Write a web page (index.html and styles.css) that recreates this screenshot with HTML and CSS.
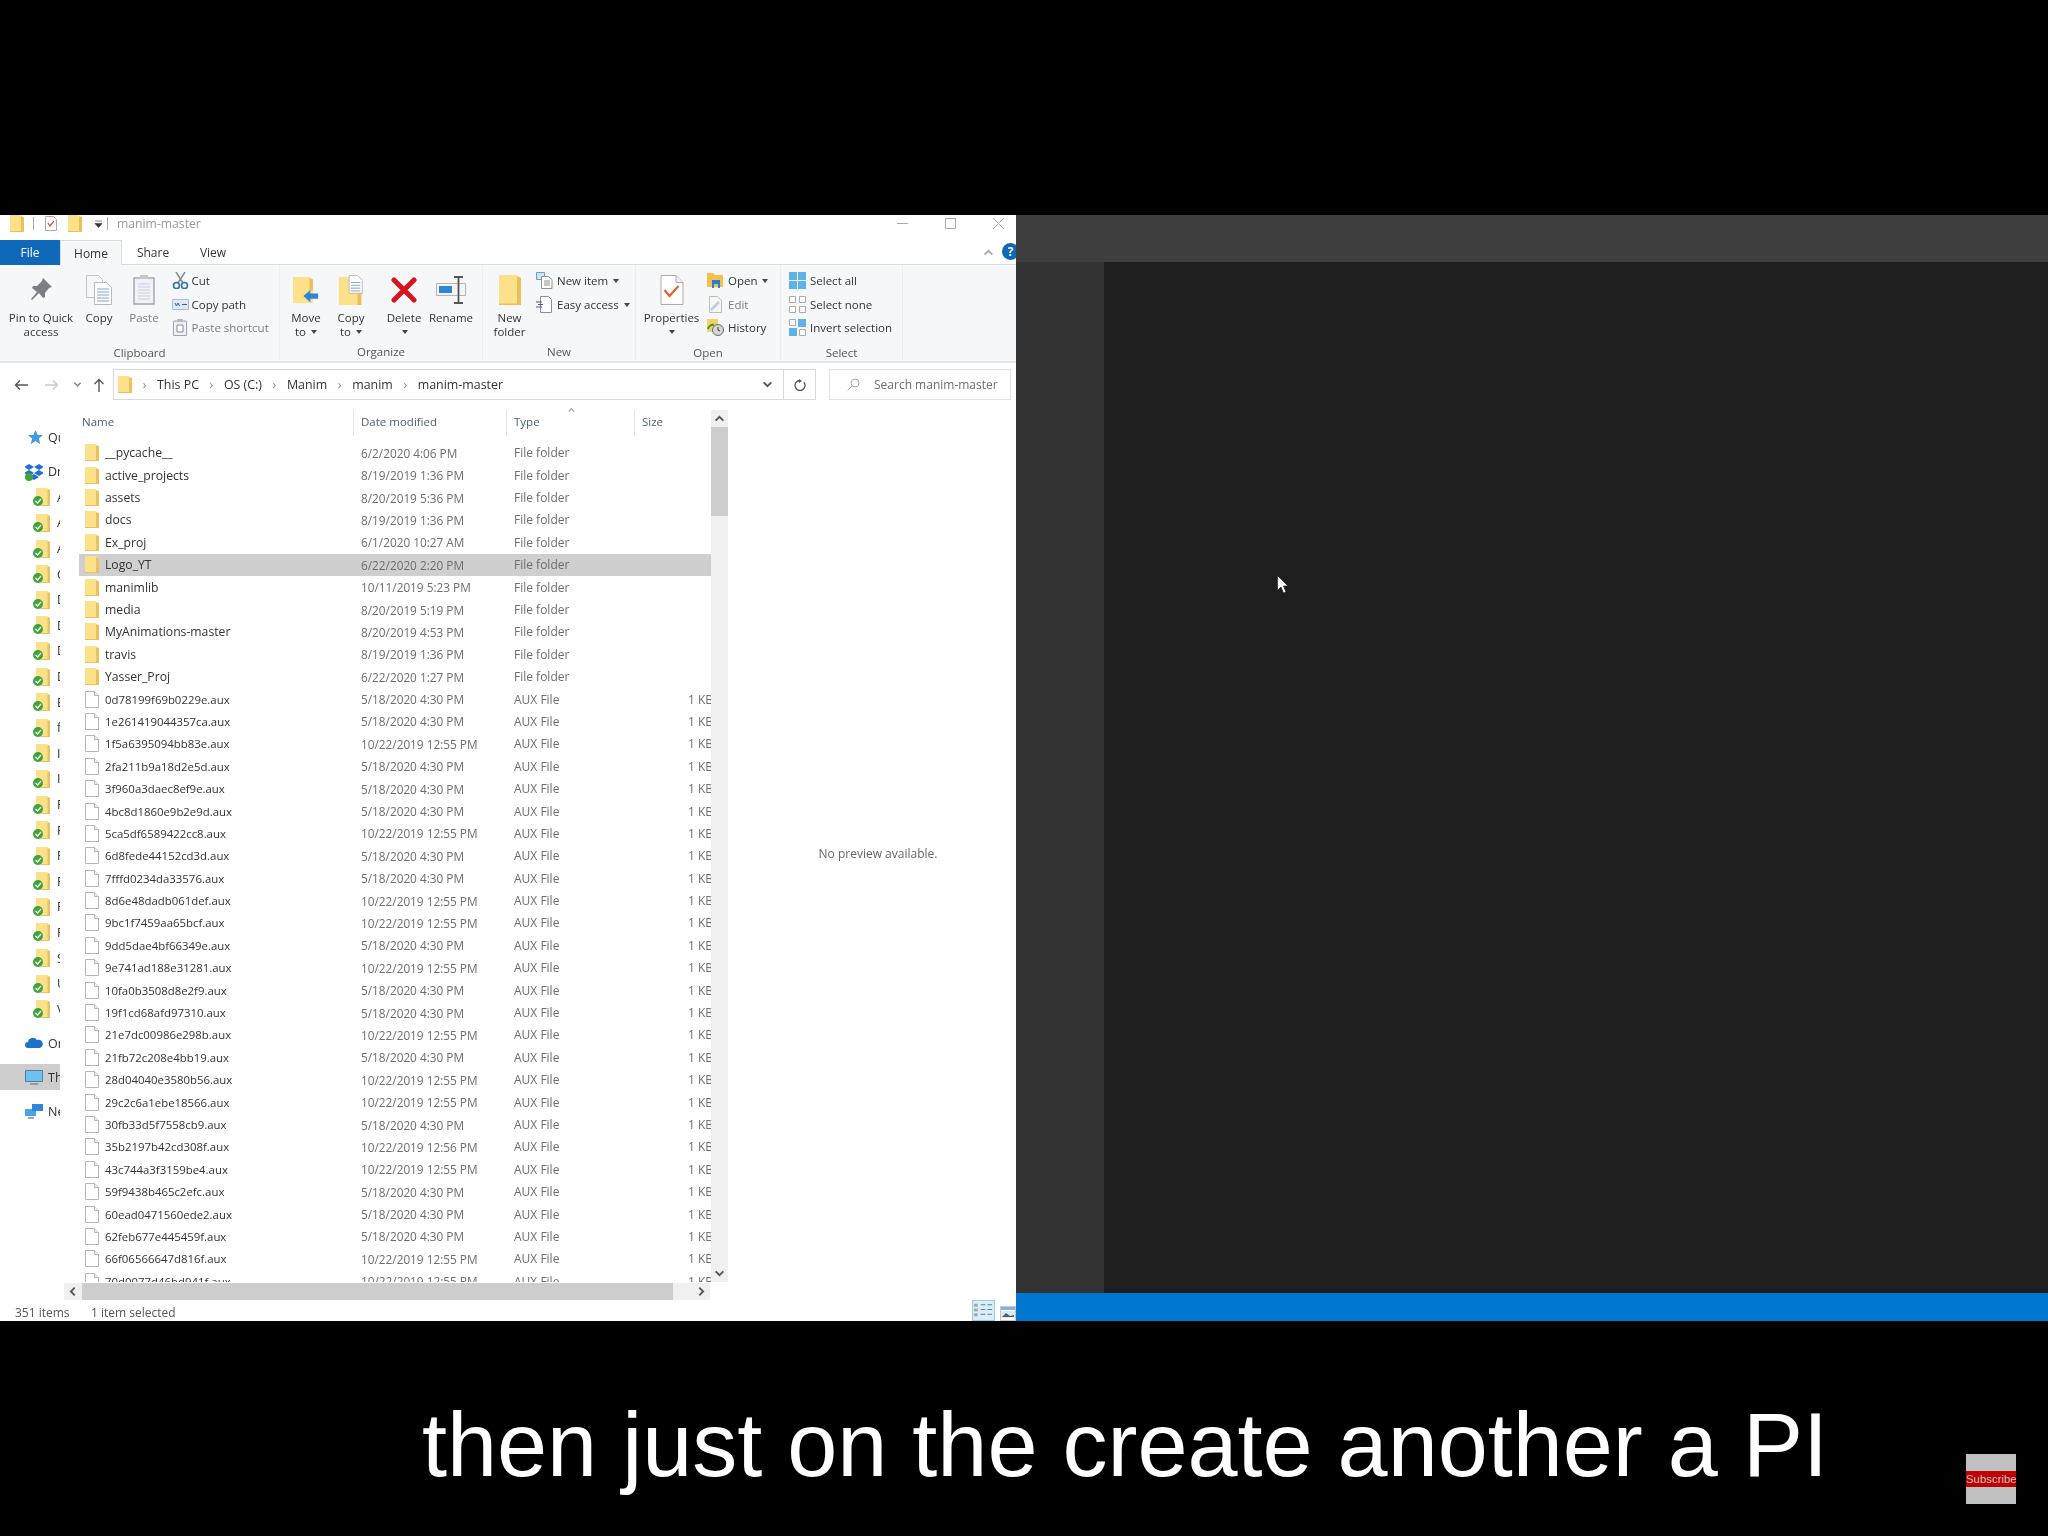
FILE: index.html
```html
<!DOCTYPE html>
<html lang="en">
<head>
  <meta charset="UTF-8">
  <title>manim-master</title>
  <link rel="stylesheet" href="styles.css">
</head>
<body>
  <svg class="defs" width="0" height="0">
    <symbol id="folder" viewBox="0 0 14 17">
      <path d="M0 0h10l4 2v15H0z" fill="#fde08a"/>
      <path d="M11 1.500l3 1V17H0v-1h11z" fill="#e9c25f"/>
    </symbol>
    <symbol id="bigfolder" viewBox="0 0 22 30">
      <path d="M0 0h17l5 3v27H0z" fill="#fde08a"/>
      <path d="M18 1.500l4 1.500v27H0v-1.500h18z" fill="#eabf5a"/>
    </symbol>
    <symbol id="file" viewBox="0 0 14 17">
      <path d="M.5.5h9l4 4v12H.5z" fill="#fff" stroke="#b4b4b4"/>
      <path d="M9.500.5v4h4" fill="#f0f0f0" stroke="#b4b4b4"/>
    </symbol>
    <symbol id="synced" viewBox="0 0 18 18">
      <path d="M3 0h11l3 2v16H3z" fill="#fde08a"/>
      <path d="M14.500 1l2.500 1v16H8v-1h6.500z" fill="#e9c25f"/>
      <circle cx="5" cy="13" r="5" fill="#3ea53a"/>
      <path d="M2.500 13l2 2 3.500-4" fill="none" stroke="#fff" stroke-width="1.300"/>
    </symbol>
    <symbol id="chev" viewBox="0 0 10 10">
      <path d="M1.500 7L5 3.500 8.500 7" fill="none" stroke="currentColor" stroke-width="1.700"/>
    </symbol>
  </svg>

  <div class="top-band"></div>

  <main class="screen">
    <section class="window">
      <header class="titlebar">
        <svg class="qa qa-folder"><use href="#folder"/></svg>
        <span class="qa-sep"></span>
        <svg class="qa qa-props" viewBox="0 0 12 15"><path d="M.5.5h8l3 3v11H.5z" fill="#fff" stroke="#aaa"/><path d="M3 7l2 3 4-5" fill="none" stroke="#d9542b" stroke-width="1.300"/></svg>
        <svg class="qa qa-folder2"><use href="#folder"/></svg>
        <svg class="qa qa-down" viewBox="0 0 9 8"><path d="M1 1h7M1 3.500h7l-3.500 4z" fill="#333" stroke="#333" stroke-width=".6"/></svg>
        <span class="qa-sep qa-sep-b"></span>
        <span class="title-text">manim-master</span>
        <div class="win-btns">
          <svg viewBox="0 0 11 11"><path d="M0 5.500h11" stroke="#aaa"/></svg>
          <svg viewBox="0 0 11 11"><path d="M.5.500h10v10H.5z" fill="none" stroke="#aaa"/></svg>
          <svg viewBox="0 0 11 11"><path d="M0 0l11 11M11 0L0 11" stroke="#aaa"/></svg>
        </div>
      </header>

      <nav class="tabs">
        <span class="tab tab-file">File</span>
        <span class="tab tab-home">Home</span>
        <span class="tab tab-share">Share</span>
        <span class="tab tab-view">View</span>
        <svg class="collapse"><use href="#chev"/></svg>
        <span class="help">?</span>
      </nav>

      <div class="ribbon">
        <div class="group group-clipboard">
          <div class="group-items">
            <div class="big w-pin">
              <svg viewBox="0 0 22 24"><path d="M13 0l9 9-3 1-4 5 0 4-2 1-4-5-7 7-1-1 6-7-5-4 1-2h4l5-5z" fill="#7d7d85"/></svg>
              <span>Pin to Quick<br>access</span>
            </div>
            <div class="big w-copy">
              <svg viewBox="0 0 26 30"><path d="M.5.500h12l4 4v18H.5z" fill="#f7f7f7" stroke="#c3c3c3"/><path d="M8.500 7.500h12l5 5v17h-17z" fill="#fff" stroke="#b9b9b9"/><path d="M11 14h12M11 17h12M11 20h12M11 23h12M11 26h12" stroke="#7fa7c9"/></svg>
              <span>Copy</span>
            </div>
            <div class="big w-paste off">
              <svg viewBox="0 0 22 30"><path d="M1 3h20v26H1z" fill="#f2f2f6" stroke="#a7a7b5" stroke-width="1.500"/><path d="M7 0h8v4H7z" fill="#c5c5c5"/><path d="M5 9h12M5 12h12M5 15h12M5 18h12M5 21h12M5 24h12" stroke="#c9cfe3"/></svg>
              <span>Paste</span>
            </div>
            <div class="small-col">
              <div class="small">
                <svg viewBox="0 0 17 17"><path d="M4 0l7 11M13 0L6 11" stroke="#8a8a8a" stroke-width="1.500"/><circle cx="4.500" cy="13.500" r="3" fill="none" stroke="#2c6fb7" stroke-width="1.600"/><circle cx="12.500" cy="13.500" r="3" fill="none" stroke="#2c6fb7" stroke-width="1.600"/></svg>
                <span>Cut</span>
              </div>
              <div class="small">
                <svg viewBox="0 0 17 17"><path d="M.5 3.500h16v10H.5z" fill="#dfe9f7" stroke="#a9bcd6"/><path d="M3 7l1.500 3L6 7l1.500 3M10 8.500h5" stroke="#2f5fa8" fill="none"/></svg>
                <span>Copy path</span>
              </div>
              <div class="small off">
                <svg viewBox="0 0 17 17"><path d="M1.500 2h13v14.500h-13z" fill="#eef0f7" stroke="#9aa3b9"/><path d="M5 0h6v3H5z" fill="#b9b9b9"/><path d="M5 6h6v7H5z" fill="#fff" stroke="#8a8a8a"/></svg>
                <span>Paste shortcut</span>
              </div>
            </div>
          </div>
          <div class="group-label">Clipboard</div>
        </div>

        <div class="group group-organize">
          <div class="group-items">
            <div class="big w-move">
              <svg viewBox="0 0 30 30"><path d="M0 0h18l5 3v27H0z" fill="#fde08a"/><path d="M19 1.500l4 1.500v13h-4z" fill="#eabf5a"/><path d="M12 22l8-7v4h9v6h-9v4z" fill="#2f86d6"/></svg>
              <span>Move<br>to <i class="caret"></i></span>
            </div>
            <div class="big w-copyto">
              <svg viewBox="0 0 26 32"><path d="M0 2h19l5 3v27H0z" fill="#fde08a"/><path d="M20 3.500l4 1.500v27h-4z" fill="#eabf5a"/><path d="M11 .5h9l5 5v14H11z" fill="#fff" stroke="#b9b9b9"/><path d="M13 8h10M13 11h10M13 14h10M13 17h10" stroke="#7fa7c9"/></svg>
              <span>Copy<br>to <i class="caret"></i></span>
            </div>
            <div class="big w-delete">
              <svg viewBox="0 0 26 26"><path d="M3 3l20 20M23 3L3 23" stroke="#d8121f" stroke-width="5" stroke-linecap="round"/></svg>
              <span>Delete<br><i class="caret"></i></span>
            </div>
            <div class="big w-rename">
              <svg viewBox="0 0 30 28"><path d="M.5 7.500h29v12H.5z" fill="#f4f4f4" stroke="#b5b5b5"/><path d="M3 10h13v7H3z" fill="#2f86d6"/><path d="M18 1h9M22.500 1v26M18 27h9" stroke="#555" stroke-width="1.800"/></svg>
              <span>Rename</span>
            </div>
          </div>
          <div class="group-label">Organize</div>
        </div>

        <div class="group group-new">
          <div class="group-items">
            <div class="big w-newfolder">
              <svg class="big-narrow"><use href="#bigfolder"/></svg>
              <span>New<br>folder</span>
            </div>
            <div class="small-col">
              <div class="small">
                <svg viewBox="0 0 17 17"><path d="M.5.5h8v7h-8z" fill="#cfe3f5" stroke="#6f9cc4"/><path d="M5.500 4.500h7l3.500 3v9H5.500z" fill="#fff" stroke="#8f8f8f"/><path d="M8 9h6M8 11h6M8 13h6" stroke="#8f8f8f"/></svg>
                <span>New item <i class="caret"></i></span>
              </div>
              <div class="small">
                <svg viewBox="0 0 17 17"><path d="M4.500.5h8l3 3v13h-11z" fill="#fff" stroke="#8f8f8f"/><path d="M0 6h6M2 8.500h5M0 11h6" stroke="#2f5fa8"/></svg>
                <span>Easy access <i class="caret"></i></span>
              </div>
            </div>
          </div>
          <div class="group-label">New</div>
        </div>

        <div class="group group-open">
          <div class="group-items">
            <div class="big w-props">
              <svg viewBox="0 0 23 30"><path d="M.5.500h15l7 7v22H.5z" fill="#fff" stroke="#a9a9a9"/><path d="M15.500.5v7h7" fill="#eee" stroke="#a9a9a9"/><path d="M4 15l5 6 9-10" fill="none" stroke="#e2622b" stroke-width="2.200"/></svg>
              <span>Properties<br><i class="caret"></i></span>
            </div>
            <div class="small-col">
              <div class="small">
                <svg viewBox="0 0 17 17"><path d="M0 1h6l2 2h8v12H0z" fill="#f4c04e"/><path d="M5 8h8v8h-2v-4H7v4H5z" fill="#2b7fcf"/></svg>
                <span>Open <i class="caret"></i></span>
              </div>
              <div class="small off">
                <svg viewBox="0 0 17 17"><path d="M2.500.5h8l4 4v12h-12z" fill="#f6f6f6" stroke="#bbb"/><path d="M4 14l8-8" stroke="#b9cde6" stroke-width="2.500"/></svg>
                <span>Edit</span>
              </div>
              <div class="small">
                <svg viewBox="0 0 17 17"><path d="M0 0h11v13H0z" fill="#f6d266"/><path d="M1 10a5 5 0 0 1 6-4" stroke="#3c9b35" stroke-width="2" fill="none"/><circle cx="11" cy="11" r="5.500" fill="#d6d6d6" stroke="#6a6a6a"/><path d="M11 8v3l2 1" stroke="#333" fill="none"/></svg>
                <span>History</span>
              </div>
            </div>
          </div>
          <div class="group-label">Open</div>
        </div>

        <div class="group group-select">
          <div class="group-items">
            <div class="small-col">
              <div class="small">
                <svg viewBox="0 0 17 17"><path d="M0 0h8v8H0zM9 0h8v8H9zM0 9h8v8H0zM9 9h8v8H9z" fill="#5db2ea"/></svg>
                <span>Select all</span>
              </div>
              <div class="small">
                <svg viewBox="0 0 17 17"><path d="M.5.5h6v6h-6zM10.500.5h6v6h-6zM.5 10.500h6v6h-6zM10.500 10.500h6v6h-6z" fill="#fff" stroke="#aaa"/></svg>
                <span>Select none</span>
              </div>
              <div class="small">
                <svg viewBox="0 0 17 17"><path d="M.5.5h6v6h-6zM10.500 10.500h6v6h-6z" fill="#fff" stroke="#aaa"/><path d="M9 0h8v8H9zM0 9h8v8H0z" fill="#5db2ea"/></svg>
                <span>Invert selection</span>
              </div>
            </div>
          </div>
          <div class="group-label">Select</div>
        </div>
      </div>

      <div class="addressrow">
        <svg class="nav-arrow" viewBox="0 0 14 12"><path d="M14 6H2M6 1.500L1.500 6 6 10.500" fill="none" stroke="#555" stroke-width="1.400"/></svg>
        <svg class="nav-arrow nav-fwd" viewBox="0 0 14 12"><path d="M0 6h12M8 1.500L12.500 6 8 10.500" fill="none" stroke="#ccc" stroke-width="1.400"/></svg>
        <svg class="nav-recent"><use href="#chev"/></svg>
        <svg class="nav-up" viewBox="0 0 12 14"><path d="M6 14V2M1.500 6L6 1.500 10.500 6" fill="none" stroke="#555" stroke-width="1.400"/></svg>
        <div class="address">
          <svg class="addr-folder"><use href="#folder"/></svg>
          <span class="crumb-sep">&rsaquo;</span><span>This PC</span>
          <span class="crumb-sep">&rsaquo;</span><span>OS (C:)</span>
          <span class="crumb-sep">&rsaquo;</span><span>Manim</span>
          <span class="crumb-sep">&rsaquo;</span><span>manim</span>
          <span class="crumb-sep">&rsaquo;</span><span>manim-master</span>
          <div class="addr-end">
            <svg class="addr-drop"><use href="#chev"/></svg>
            <div class="addr-refresh">
              <svg viewBox="0 0 12 12"><path d="M9.800 3.200A5 5 0 1 1 6 1.500" fill="none" stroke="#555" stroke-width="1.300"/><path d="M5 0l3 2-3 2z" fill="#555"/></svg>
            </div>
          </div>
        </div>
        <div class="search">
          <svg viewBox="0 0 13 13"><circle cx="8" cy="5" r="4" fill="none" stroke="#aaa"/><path d="M5 8l-4.500 4.500" stroke="#aaa"/></svg>
          <span>Search manim-master</span>
        </div>
      </div>

      <div class="explorer">
        <aside class="navpane">
          <div class="nav-item top first"><svg class="nav-star" viewBox="0 0 18 18"><path d="M9 0l2.600 6H18l-5 4.300L14.800 17 9 13.200 3.200 17 5 10.300 0 6h6.400z" fill="#3f9be0"/></svg><span>Quick access</span></div>
          <div class="nav-item top"><svg viewBox="0 0 18 18"><path d="M4 1l5 3-5 3-5-3zM14 1l5 3-5 3-5-3zM4 7l5 3-5 3-5-3zM14 7l5 3-5 3-5-3zM9 11l5 3-5 3-5-3z" fill="#1f6fd6"/><circle cx="4" cy="14" r="4" fill="#3ea53a"/></svg><span>Dropbox</span></div>
          <div class="nav-item sub"><svg><use href="#synced"/></svg><span>A</span></div>
          <div class="nav-item sub"><svg><use href="#synced"/></svg><span>A</span></div>
          <div class="nav-item sub"><svg><use href="#synced"/></svg><span>A</span></div>
          <div class="nav-item sub"><svg><use href="#synced"/></svg><span>C</span></div>
          <div class="nav-item sub"><svg><use href="#synced"/></svg><span>D</span></div>
          <div class="nav-item sub"><svg><use href="#synced"/></svg><span>D</span></div>
          <div class="nav-item sub"><svg><use href="#synced"/></svg><span>D</span></div>
          <div class="nav-item sub"><svg><use href="#synced"/></svg><span>D</span></div>
          <div class="nav-item sub"><svg><use href="#synced"/></svg><span>E</span></div>
          <div class="nav-item sub"><svg><use href="#synced"/></svg><span>f</span></div>
          <div class="nav-item sub"><svg><use href="#synced"/></svg><span>I</span></div>
          <div class="nav-item sub"><svg><use href="#synced"/></svg><span>I</span></div>
          <div class="nav-item sub"><svg><use href="#synced"/></svg><span>F</span></div>
          <div class="nav-item sub"><svg><use href="#synced"/></svg><span>F</span></div>
          <div class="nav-item sub"><svg><use href="#synced"/></svg><span>F</span></div>
          <div class="nav-item sub"><svg><use href="#synced"/></svg><span>F</span></div>
          <div class="nav-item sub"><svg><use href="#synced"/></svg><span>F</span></div>
          <div class="nav-item sub"><svg><use href="#synced"/></svg><span>F</span></div>
          <div class="nav-item sub"><svg><use href="#synced"/></svg><span>S</span></div>
          <div class="nav-item sub"><svg><use href="#synced"/></svg><span>U</span></div>
          <div class="nav-item sub"><svg><use href="#synced"/></svg><span>V</span></div>
          <div class="nav-item top"><svg viewBox="0 0 18 18"><path d="M3 14a3 3 0 0 1 0-6 5 5 0 0 1 9-2 4 4 0 0 1 3 8z" fill="#1a73c9"/></svg><span>OneDrive</span></div>
          <div class="nav-item top current"><svg viewBox="0 0 18 18"><path d="M.5 2.500h17v11H.5z" fill="#6cc3f2" stroke="#5a7d99"/><path d="M5 16h8" stroke="#8a8a8a" stroke-width="1.500"/></svg><span>This PC</span></div>
          <div class="nav-item top"><svg viewBox="0 0 18 18"><path d="M0 7h11v7H0z" fill="#4aa3e6"/><path d="M7 2h11v7H7z" fill="#2f86d6"/><path d="M3 16h6" stroke="#7a8a99" stroke-width="1.500"/></svg><span>Network</span></div>
        </aside>

        <div class="files">
          <div class="files-top">
            <div class="list">
              <div class="list-head">
                <span class="col-name">Name</span>
                <span class="col-date">Date modified</span>
                <span class="col-type">Type<svg class="sort"><use href="#chev"/></svg></span>
                <span class="col-size">Size</span>
              </div>
              <div class="row"><svg><use href="#folder"/></svg><span class="col-name">__pycache__</span><span class="col-date">6/2/2020 4:06 PM</span><span class="col-type">File folder</span></div>
              <div class="row"><svg><use href="#folder"/></svg><span class="col-name">active_projects</span><span class="col-date">8/19/2019 1:36 PM</span><span class="col-type">File folder</span></div>
              <div class="row"><svg><use href="#folder"/></svg><span class="col-name">assets</span><span class="col-date">8/20/2019 5:36 PM</span><span class="col-type">File folder</span></div>
              <div class="row"><svg><use href="#folder"/></svg><span class="col-name">docs</span><span class="col-date">8/19/2019 1:36 PM</span><span class="col-type">File folder</span></div>
              <div class="row"><svg><use href="#folder"/></svg><span class="col-name">Ex_proj</span><span class="col-date">6/1/2020 10:27 AM</span><span class="col-type">File folder</span></div>
              <div class="row selected"><svg><use href="#folder"/></svg><span class="col-name">Logo_YT</span><span class="col-date">6/22/2020 2:20 PM</span><span class="col-type">File folder</span></div>
              <div class="row"><svg><use href="#folder"/></svg><span class="col-name">manimlib</span><span class="col-date">10/11/2019 5:23 PM</span><span class="col-type">File folder</span></div>
              <div class="row"><svg><use href="#folder"/></svg><span class="col-name">media</span><span class="col-date">8/20/2019 5:19 PM</span><span class="col-type">File folder</span></div>
              <div class="row"><svg><use href="#folder"/></svg><span class="col-name">MyAnimations-master</span><span class="col-date">8/20/2019 4:53 PM</span><span class="col-type">File folder</span></div>
              <div class="row"><svg><use href="#folder"/></svg><span class="col-name">travis</span><span class="col-date">8/19/2019 1:36 PM</span><span class="col-type">File folder</span></div>
              <div class="row"><svg><use href="#folder"/></svg><span class="col-name">Yasser_Proj</span><span class="col-date">6/22/2020 1:27 PM</span><span class="col-type">File folder</span></div>
              <div class="row aux"><svg><use href="#file"/></svg><span class="col-name">0d78199f69b0229e.aux</span><span class="col-date">5/18/2020 4:30 PM</span><span class="col-type">AUX File</span><span class="col-size">1 KB</span></div>
              <div class="row aux"><svg><use href="#file"/></svg><span class="col-name">1e261419044357ca.aux</span><span class="col-date">5/18/2020 4:30 PM</span><span class="col-type">AUX File</span><span class="col-size">1 KB</span></div>
              <div class="row aux"><svg><use href="#file"/></svg><span class="col-name">1f5a6395094bb83e.aux</span><span class="col-date">10/22/2019 12:55 PM</span><span class="col-type">AUX File</span><span class="col-size">1 KB</span></div>
              <div class="row aux"><svg><use href="#file"/></svg><span class="col-name">2fa211b9a18d2e5d.aux</span><span class="col-date">5/18/2020 4:30 PM</span><span class="col-type">AUX File</span><span class="col-size">1 KB</span></div>
              <div class="row aux"><svg><use href="#file"/></svg><span class="col-name">3f960a3daec8ef9e.aux</span><span class="col-date">5/18/2020 4:30 PM</span><span class="col-type">AUX File</span><span class="col-size">1 KB</span></div>
              <div class="row aux"><svg><use href="#file"/></svg><span class="col-name">4bc8d1860e9b2e9d.aux</span><span class="col-date">5/18/2020 4:30 PM</span><span class="col-type">AUX File</span><span class="col-size">1 KB</span></div>
              <div class="row aux"><svg><use href="#file"/></svg><span class="col-name">5ca5df6589422cc8.aux</span><span class="col-date">10/22/2019 12:55 PM</span><span class="col-type">AUX File</span><span class="col-size">1 KB</span></div>
              <div class="row aux"><svg><use href="#file"/></svg><span class="col-name">6d8fede44152cd3d.aux</span><span class="col-date">5/18/2020 4:30 PM</span><span class="col-type">AUX File</span><span class="col-size">1 KB</span></div>
              <div class="row aux"><svg><use href="#file"/></svg><span class="col-name">7fffd0234da33576.aux</span><span class="col-date">5/18/2020 4:30 PM</span><span class="col-type">AUX File</span><span class="col-size">1 KB</span></div>
              <div class="row aux"><svg><use href="#file"/></svg><span class="col-name">8d6e48dadb061def.aux</span><span class="col-date">10/22/2019 12:55 PM</span><span class="col-type">AUX File</span><span class="col-size">1 KB</span></div>
              <div class="row aux"><svg><use href="#file"/></svg><span class="col-name">9bc1f7459aa65bcf.aux</span><span class="col-date">10/22/2019 12:55 PM</span><span class="col-type">AUX File</span><span class="col-size">1 KB</span></div>
              <div class="row aux"><svg><use href="#file"/></svg><span class="col-name">9dd5dae4bf66349e.aux</span><span class="col-date">5/18/2020 4:30 PM</span><span class="col-type">AUX File</span><span class="col-size">1 KB</span></div>
              <div class="row aux"><svg><use href="#file"/></svg><span class="col-name">9e741ad188e31281.aux</span><span class="col-date">10/22/2019 12:55 PM</span><span class="col-type">AUX File</span><span class="col-size">1 KB</span></div>
              <div class="row aux"><svg><use href="#file"/></svg><span class="col-name">10fa0b3508d8e2f9.aux</span><span class="col-date">5/18/2020 4:30 PM</span><span class="col-type">AUX File</span><span class="col-size">1 KB</span></div>
              <div class="row aux"><svg><use href="#file"/></svg><span class="col-name">19f1cd68afd97310.aux</span><span class="col-date">5/18/2020 4:30 PM</span><span class="col-type">AUX File</span><span class="col-size">1 KB</span></div>
              <div class="row aux"><svg><use href="#file"/></svg><span class="col-name">21e7dc00986e298b.aux</span><span class="col-date">10/22/2019 12:55 PM</span><span class="col-type">AUX File</span><span class="col-size">1 KB</span></div>
              <div class="row aux"><svg><use href="#file"/></svg><span class="col-name">21fb72c208e4bb19.aux</span><span class="col-date">5/18/2020 4:30 PM</span><span class="col-type">AUX File</span><span class="col-size">1 KB</span></div>
              <div class="row aux"><svg><use href="#file"/></svg><span class="col-name">28d04040e3580b56.aux</span><span class="col-date">10/22/2019 12:55 PM</span><span class="col-type">AUX File</span><span class="col-size">1 KB</span></div>
              <div class="row aux"><svg><use href="#file"/></svg><span class="col-name">29c2c6a1ebe18566.aux</span><span class="col-date">10/22/2019 12:55 PM</span><span class="col-type">AUX File</span><span class="col-size">1 KB</span></div>
              <div class="row aux"><svg><use href="#file"/></svg><span class="col-name">30fb33d5f7558cb9.aux</span><span class="col-date">5/18/2020 4:30 PM</span><span class="col-type">AUX File</span><span class="col-size">1 KB</span></div>
              <div class="row aux"><svg><use href="#file"/></svg><span class="col-name">35b2197b42cd308f.aux</span><span class="col-date">10/22/2019 12:56 PM</span><span class="col-type">AUX File</span><span class="col-size">1 KB</span></div>
              <div class="row aux"><svg><use href="#file"/></svg><span class="col-name">43c744a3f3159be4.aux</span><span class="col-date">10/22/2019 12:55 PM</span><span class="col-type">AUX File</span><span class="col-size">1 KB</span></div>
              <div class="row aux"><svg><use href="#file"/></svg><span class="col-name">59f9438b465c2efc.aux</span><span class="col-date">5/18/2020 4:30 PM</span><span class="col-type">AUX File</span><span class="col-size">1 KB</span></div>
              <div class="row aux"><svg><use href="#file"/></svg><span class="col-name">60ead0471560ede2.aux</span><span class="col-date">5/18/2020 4:30 PM</span><span class="col-type">AUX File</span><span class="col-size">1 KB</span></div>
              <div class="row aux"><svg><use href="#file"/></svg><span class="col-name">62feb677e445459f.aux</span><span class="col-date">5/18/2020 4:30 PM</span><span class="col-type">AUX File</span><span class="col-size">1 KB</span></div>
              <div class="row aux"><svg><use href="#file"/></svg><span class="col-name">66f06566647d816f.aux</span><span class="col-date">10/22/2019 12:55 PM</span><span class="col-type">AUX File</span><span class="col-size">1 KB</span></div>
              <div class="row aux"><svg><use href="#file"/></svg><span class="col-name">70d0077d46bd941f.aux</span><span class="col-date">10/22/2019 12:55 PM</span><span class="col-type">AUX File</span><span class="col-size">1 KB</span></div>
            </div>
            <div class="vscroll">
              <svg class="arrow"><use href="#chev"/></svg>
              <div class="vthumb"></div>
              <svg class="arrow arrow-down"><use href="#chev"/></svg>
            </div>
          </div>
          <div class="hscroll">
            <svg class="arrow arrow-left"><use href="#chev"/></svg>
            <div class="hthumb"></div>
            <svg class="arrow arrow-right"><use href="#chev"/></svg>
          </div>
        </div>

        <div class="preview">No preview available.</div>
      </div>

      <footer class="status">
        <span class="count">351 items</span>
        <span>1 item selected</span>
        <div class="views">
          <div class="view-btn active"><svg viewBox="0 0 22 16"><path d="M1 2h4v3H1zM1 7h4v3H1zM1 12h4v3H1z" fill="#aaa"/><path d="M8 3h5M15 3h5M8 8h5M15 8h5M8 13h5M15 13h5" stroke="#5c7c99"/></svg></div>
          <div class="view-btn"><svg viewBox="0 0 14 12"><path d="M0 0h14v3H0z" fill="#7ab6ea"/><path d="M0 4h14v7H0z" fill="#dfe8ef"/><path d="M1 10l4-4 4 3 4-1v2z" fill="#3f6a6a"/></svg></div>
        </div>
      </footer>
    </section>

    <section class="editor">
      <div class="editor-title"></div>
      <div class="editor-body">
        <div class="editor-side"></div>
        <div class="editor-main"></div>
      </div>
      <div class="editor-status"></div>
    </section>

    <svg class="cursor" viewBox="0 0 11 19"><path d="M.5.5v15l3.500-3.500 2.500 6 2.500-1-2.500-6h4.500z" fill="#fff" stroke="#222" stroke-width=".7"/></svg>
  </main>

  <footer class="caption-band">
    <p class="caption">then just on the create another a PI</p>
    <div class="subscribe"><span>Subscribe</span></div>
  </footer>
</body>
</html>
```

FILE: styles.css
```css
* {
  box-sizing: border-box;
}

html, body {
  margin: 0;
  height: 100%;
}

body {
  width: 2048px;
  height: 1536px;
  overflow: hidden;
  background: #000;
  display: flex;
  flex-direction: column;
  font-family: "Open Sans", "Noto Sans", sans-serif;
  font-size: 11.5px;
  color: #333;
}

svg {
  display: block;
  flex: none;
}

.defs {
  position: absolute;
}

.top-band {
  height: 215px;
}

.screen {
  position: relative;
  height: 1106px;
  display: flex;
}

/* explorer window */

.window {
  width: 1016px;
  background: #fff;
  display: flex;
  flex-direction: column;
  overflow: hidden;
  filter: blur(0.45px);
}

.titlebar {
  height: 25px;
  display: flex;
  align-items: center;
  padding: 0 0 8px 10px;
  color: #999;
}

.qa-folder {
  width: 14px;
  height: 17px;
}

.qa-sep {
  width: 1px;
  height: 13px;
  background: #aaa;
  margin: 0 11px 0 9px;
}

.qa-props {
  width: 12px;
  height: 15px;
}

.qa-folder2 {
  width: 14px;
  height: 17px;
  margin-left: 11px;
}

.qa-down {
  width: 9px;
  height: 8px;
  margin-left: 12px;
}

.qa-sep-b {
  margin: 0 9px 0 4px;
}

.title-text {
  font-size: 12.2px;
}

.win-btns {
  margin-left: auto;
  display: flex;
  margin-right: 12px;
  gap: 37px;
}

.win-btns svg {
  width: 11px;
  height: 11px;
}

.tabs {
  height: 25px;
  display: flex;
  position: relative;
  border-bottom: 1px solid #dadbdc;
  font-size: 12px;
}

.tab {
  line-height: 26px;
  text-align: center;
}

.tab-file {
  width: 60px;
  background: #0f68b8;
  color: #fff;
  height: 25px;
}

.tab-home {
  width: 62px;
  height: 25px;
  background: #f6f7f8;
  border: 1px solid #dadbdc;
  border-bottom: 0;
}

.tab-share {
  width: 62px;
}

.tab-view {
  width: 58px;
}

.collapse {
  width: 11px;
  height: 11px;
  color: #aaa;
  margin: 7px 0 0 auto;
}

.help {
  width: 17px;
  height: 17px;
  border-radius: 50%;
  background: #0f68b8;
  color: #fff;
  font-weight: 700;
  line-height: 17px;
  text-align: center;
  margin: 3px -3px 0 8px;
  flex: none;
}

.ribbon {
  height: 98px;
  display: flex;
  background: #f6f7f8;
  border-bottom: 2px solid #e6e7e8;
}

.group {
  display: flex;
  flex-direction: column;
  border-right: 1px solid #ecedee;
}

.group-clipboard { width: 280px; padding-left: 6px; }
.group-organize { width: 203px; }
.group-new { width: 153px; }
.group-open { width: 145px; }
.group-select { width: 122px; padding-left: 8px; }

.group-items {
  flex: 1;
  display: flex;
}

.group-label {
  height: 24px;
  line-height: 25px;
  text-align: center;
  color: #555;
}

.group-clipboard .group-label {
  margin-left: -6px;
}

.group-clipboard .small {
  gap: 3px;
}

.group-select .group-label {
  margin-left: -8px;
}

.big {
  display: flex;
  flex-direction: column;
  align-items: center;
  text-align: center;
  line-height: 14px;
  padding-top: 10px;
}

.big svg {
  width: 26px;
  height: 30px;
  margin-bottom: 6px;
}

.big span {
  white-space: nowrap;
}

.off {
  color: #7d7d7d;
}

.w-pin { width: 70px; }
.w-copy { width: 46px; }
.w-paste { width: 44px; margin-right: 5.5px; }
.w-move { width: 52px; }
.w-copyto { width: 38px; }
.w-delete { width: 48px; margin-left: 10px; }
.w-rename { width: 46px; }
.w-newfolder { width: 53px; }
.w-props { width: 71px; }

.big-narrow {
  padding: 0 2px;
}

.w-pin svg {
  width: 22px;
  height: 24px;
  margin: 3px 0 9px;
}

.w-delete svg {
  height: 26px;
  margin: 2px 0 8px;
}

.w-rename svg {
  width: 30px;
  height: 28px;
  margin: 1px 0 7px;
}

.small-col {
  padding-top: 4px;
  display: flex;
  flex-direction: column;
}

.small {
  height: 23.5px;
  display: flex;
  align-items: center;
  gap: 4px;
  white-space: nowrap;
}

.small svg {
  width: 17px;
  height: 17px;
}

.caret {
  display: inline-block;
  border: 3px solid transparent;
  border-top: 4px solid #444;
  border-bottom: 0;
  margin-left: 2px;
  vertical-align: 2px;
}

/* address row */

.addressrow {
  height: 42px;
  display: flex;
  align-items: flex-start;
  padding-top: 6px;
}

.nav-arrow {
  width: 14px;
  height: 12px;
  margin: 10px 0 0 14px;
}

.nav-fwd {
  margin-left: 17px;
}

.nav-recent {
  width: 9px;
  height: 9px;
  transform: rotate(180deg);
  color: #888;
  margin: 11px 0 0 14px;
}

.nav-up {
  width: 12px;
  height: 14px;
  margin: 9px 0 0 11px;
}

.address {
  width: 703px;
  height: 31px;
  margin-left: 8px;
  border: 1px solid #d9d9d9;
  display: flex;
  align-items: center;
  padding-left: 4px;
  font-size: 12.4px;
}

.addr-folder {
  width: 14px;
  height: 17px;
}

.crumb-sep {
  width: 25px;
  text-align: center;
  color: #888;
}

.addr-end {
  margin-left: auto;
  display: flex;
  align-items: center;
  height: 100%;
}

.addr-drop {
  width: 11px;
  height: 11px;
  transform: rotate(180deg);
  color: #555;
  margin-right: 10px;
}

.addr-refresh {
  width: 32px;
  height: 100%;
  border-left: 1px solid #d9d9d9;
  display: flex;
  align-items: center;
  justify-content: center;
}

.addr-refresh svg {
  width: 12px;
  height: 12px;
}

.search {
  width: 182px;
  height: 31px;
  margin-left: 13px;
  border: 1px solid #e3e3e3;
  display: flex;
  align-items: center;
  padding-left: 17px;
  gap: 14px;
  color: #6d6d6d;
  font-size: 12px;
  white-space: nowrap;
}

.search svg {
  width: 13px;
  height: 13px;
}

/* main area */

.explorer {
  height: 894px;
  display: flex;
}

.navpane {
  width: 60px;
  margin-right: 2px;
  padding-top: 20px;
  overflow: hidden;
}

.nav-item {
  height: 25.6px;
  display: flex;
  align-items: center;
  white-space: nowrap;
  font-size: 12.5px;
}

.nav-item.top {
  padding-left: 25px;
  gap: 5px;
  margin-top: 8.4px;
}

.nav-item.first {
  margin-top: 0;
}

.nav-item.sub {
  padding-left: 33px;
  gap: 6px;
}

.nav-item svg {
  width: 18px;
  height: 18px;
}

.nav-item .nav-star {
  width: 15px;
  height: 15px;
  margin: 0 0 0 3px;
}

.nav-item.current {
  background: #cdcdcd;
}

.files {
  width: 666px;
  display: flex;
  flex-direction: column;
}

.files-top {
  height: 877px;
  display: flex;
}

.list {
  width: 649px;
  padding-left: 17px;
  overflow: hidden;
}

.list-head {
  height: 36.6px;
  display: flex;
  align-items: center;
  color: #4c607a;
  padding-bottom: 4px;
}

.list-head .col-name {
  width: 282px;
  padding-left: 3px;
  margin-right: 0;
}

.list-head .col-date,
.list-head .col-type {
  position: relative;
}

.list-head .col-date::before,
.list-head .col-type::before,
.list-head .col-size::before {
  content: "";
  position: absolute;
  left: -8px;
  top: -4px;
  height: 26px;
  width: 1px;
  background: #e5e5e5;
}

.list-head .col-size {
  position: relative;
  text-align: left;
  width: auto;
  margin: 0;
}

.sort {
  position: absolute;
  left: 52px;
  top: -8px;
  width: 11px;
  height: 8px;
  color: #aaa;
}

.row {
  height: 22.4px;
  display: flex;
  align-items: center;
  padding-left: 6px;
  white-space: nowrap;
  font-size: 12px;
  color: #6d6d6d;
  width: 632px;
  overflow: hidden;
}

.row svg {
  width: 14px;
  height: 17px;
}

.row .col-name {
  width: 262px;
  flex: none;
  padding-left: 6px;
  font-size: 12.2px;
  color: #333;
}

.row.aux .col-name {
  font-size: 11.4px;
}

.col-date {
  width: 153px;
  flex: none;
}

.row .col-date {
  font-size: 11.8px;
}

.col-type {
  width: 128px;
  flex: none;
}

.col-size {
  width: 71px;
  flex: none;
  text-align: right;
}

.row.selected {
  background: #cfcfcf;
}

.vscroll {
  width: 17px;
  margin-top: 5px;
  background: #f0f0f0;
  display: flex;
  flex-direction: column;
}

.arrow {
  width: 17px;
  height: 17px;
  padding: 3px;
  color: #555;
}

.arrow-down {
  margin-top: auto;
  transform: rotate(180deg);
}

.vthumb {
  height: 89px;
  background: #cdcdcd;
}

.hscroll {
  height: 17px;
  margin: 1px 18px 0 2px;
  background: #f0f0f0;
  display: flex;
}

.hthumb {
  width: 591px;
  background: #cdcdcd;
  margin-left: 1px;
}

.arrow-left {
  transform: rotate(-90deg);
}

.arrow-right {
  transform: rotate(90deg);
  margin-left: 20px;
}

.preview {
  flex: 1;
  display: flex;
  align-items: center;
  justify-content: center;
  color: #666;
  padding: 3px 0 0 12px;
  font-size: 12px;
}

.status {
  height: 22px;
  display: flex;
  align-items: center;
  padding: 4px 0 0 15px;
  color: #555;
  font-size: 12px;
}

.count {
  width: 76px;
}

.views {
  margin-left: auto;
  display: flex;
  align-items: flex-end;
  margin-top: -4px;
  height: 22px;
  gap: 5px;
}

.view-btn {
  width: 16px;
  height: 15px;
  border: 1px solid #c4c4c4;
}

.view-btn svg {
  width: 14px;
  height: 12px;
}

.view-btn.active {
  width: 23px;
  height: 21px;
  border: 1px solid #8fd0e6;
  background: #d8eef8;
}

.view-btn.active svg {
  width: 21px;
  height: 17px;
}

/* dark editor on the right */

.editor {
  flex: 1;
  display: flex;
  flex-direction: column;
  background: #333;
}

.editor-title {
  height: 47px;
  background: #3e3e3e;
}

.editor-body {
  flex: 1;
  display: flex;
}

.editor-side {
  width: 88px;
  background: #333;
}

.editor-main {
  flex: 1;
  background: #1e1e1e;
}

.editor-status {
  height: 28px;
  background: #0078d0;
}

.cursor {
  position: absolute;
  left: 1277px;
  top: 360px;
  width: 11px;
  height: 19px;
}

/* caption */

.caption-band {
  flex: 1;
  display: flex;
  padding: 59px 32px 0 422px;
}

.caption {
  margin: 0;
  font-family: "Liberation Sans", Arial, sans-serif;
  font-size: 90px;
  line-height: 130px;
  color: #fff;
  white-space: nowrap;
}

.subscribe {
  width: 50px;
  height: 50px;
  margin: 74px 0 0 auto;
  background: #c0c0c0;
  display: flex;
  align-items: center;
  overflow: hidden;
}

.subscribe span {
  width: 100%;
  height: 16px;
  background: #c00000;
  color: #c6c6c6;
  font-family: "Liberation Sans", Arial, sans-serif;
  font-size: 11.4px;
  line-height: 16px;
}
```
